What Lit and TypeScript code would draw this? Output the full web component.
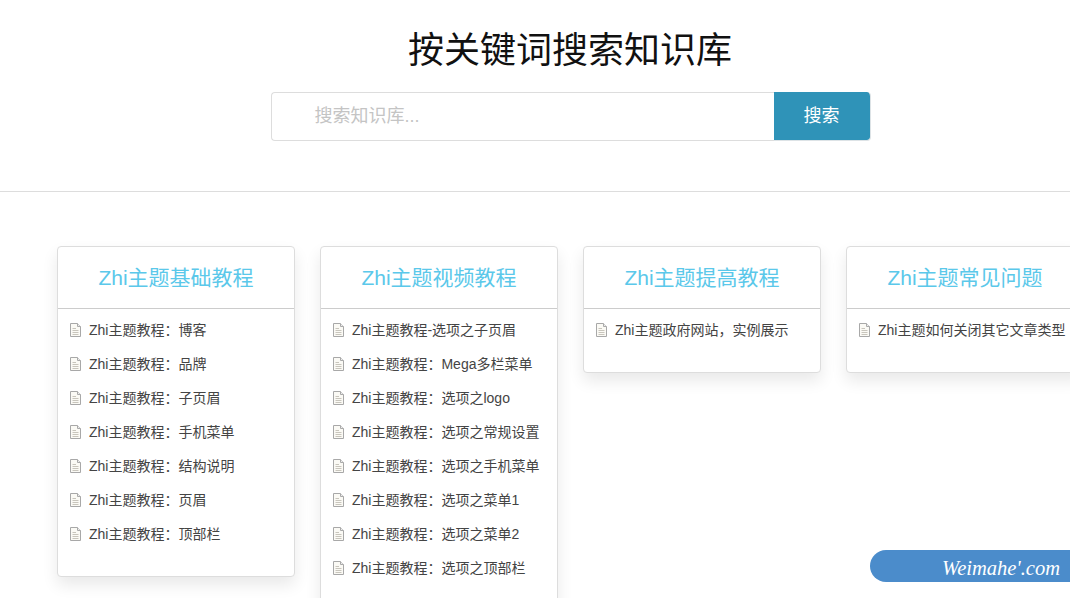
import { LitElement, html, css, svg } from "lit";
import { customElement } from "lit/decorators.js";

const cards = [
  { title: "Zhi主题基础教程", items: ["Zhi主题教程：博客", "Zhi主题教程：品牌", "Zhi主题教程：子页眉", "Zhi主题教程：手机菜单", "Zhi主题教程：结构说明", "Zhi主题教程：页眉", "Zhi主题教程：顶部栏"] },
  { title: "Zhi主题视频教程", items: ["Zhi主题教程-选项之子页眉", "Zhi主题教程：Mega多栏菜单", "Zhi主题教程：选项之logo", "Zhi主题教程：选项之常规设置", "Zhi主题教程：选项之手机菜单", "Zhi主题教程：选项之菜单1", "Zhi主题教程：选项之菜单2", "Zhi主题教程：选项之顶部栏"] },
  { title: "Zhi主题提高教程", items: ["Zhi主题政府网站，实例展示"] },
  { title: "Zhi主题常见问题", items: ["Zhi主题如何关闭其它文章类型"] },
];

const docIcon = svg`<svg class="doc" width="11" height="14" viewBox="0 0 11 14" fill="none">
  <path d="M.5 .5H7.5L10.5 3.5V13.5H.5Z" fill="#fbfaf5" stroke="#a8a8a8"/>
  <path d="M7.5 .5V3.5H10.5" stroke="#aaa" fill="#eee"/>
  <path d="M2.5 5.5H6M2.5 7.5H8.5M2.5 9.5H8.5M2.5 11.5H8.5" stroke="#c8c5bc"/>
</svg>`;

@customElement("app-root")
export class AppRoot extends LitElement {
  static styles = css`
    :host {
      display: block;
      width: 1070px;
      height: 598px;
      overflow: hidden;
      position: relative;
      background: #fff;
      font-family: "Liberation Sans", "Noto Sans CJK SC", sans-serif;
    }
    .hero {
      display: flex;
      flex-direction: column;
      align-items: center;
      height: 192px;
      box-sizing: border-box;
      padding: 30px 0 0 70px;
      border-bottom: 1px solid #ddd;
      margin-bottom: 54px;
    }
    h1 {
      margin: 0 0 21px;
      font-size: 36px;
      line-height: 41px;
      font-weight: 400;
      color: #111;
    }
    .search {
      display: flex;
      width: 600px;
      height: 49px;
      margin-left: 1px;
    }
    .input {
      flex: 1;
      box-sizing: border-box;
      border: 1px solid #ddd;
      border-right: 0;
      border-radius: 4px 0 0 4px;
      padding-left: 43px;
      font-size: 18px;
      line-height: 46px;
      color: #c4c4c4;
    }
    .btn {
      width: 97px;
      box-sizing: border-box;
      background: #2f93b8;
      background-clip: padding-box;
      border: solid #dde3e6;
      border-width: 0 1px 1px 0;
      border-radius: 0 4px 4px 0;
      color: #fff;
      font-size: 18px;
      line-height: 48px;
      text-align: center;
    }
    .cards {
      display: flex;
      align-items: flex-start;
      gap: 25px;
      padding-left: 57px;
    }
    .card {
      flex: 0 0 238px;
      box-sizing: border-box;
      border: 1px solid #ddd;
      border-radius: 4px;
      box-shadow: 0 8px 16px rgba(0, 0, 0, 0.09);
      background: #fff;
    }
    .title {
      height: 62px;
      box-sizing: border-box;
      border-bottom: 1px solid #ccc;
      text-align: center;
      font-size: 21px;
      line-height: 61px;
      color: #5bc8ea;
    }
    ul { list-style: none; margin: 0; padding: 3px 0 26px 12px; }
    li {
      display: flex;
      align-items: center;
      height: 34px;
      font-size: 14px;
      color: #444;
      white-space: nowrap;
    }
    .doc { margin: 2px 8px 0 0; flex: none; }
    .ribbon {
      position: absolute;
      right: 0;
      top: 550px;
      width: 200px;
      height: 32px;
      border-radius: 16px 0 0 16px;
      background: #4b8ccb;
      color: #fff;
      font-family: "Liberation Serif", serif;
      font-style: italic;
      font-size: 20.5px;
      line-height: 37px;
      text-align: right;
      padding-right: 10px;
      box-sizing: border-box;
    }
  `;

  render() {
    return html`
      <div class="hero">
        <h1>按关键词搜索知识库</h1>
        <div class="search">
          <div class="input">搜索知识库...</div>
          <div class="btn">搜索</div>
        </div>
      </div>
      <div class="cards">
        ${cards.map(
          (c) => html`<div class="card">
            <div class="title">${c.title}</div>
            <ul>${c.items.map((i) => html`<li>${docIcon}<span>${i}</span></li>`)}</ul>
          </div>`
        )}
      </div>
      <div class="ribbon">Weimahe'.com</div>
    `;
  }
}
